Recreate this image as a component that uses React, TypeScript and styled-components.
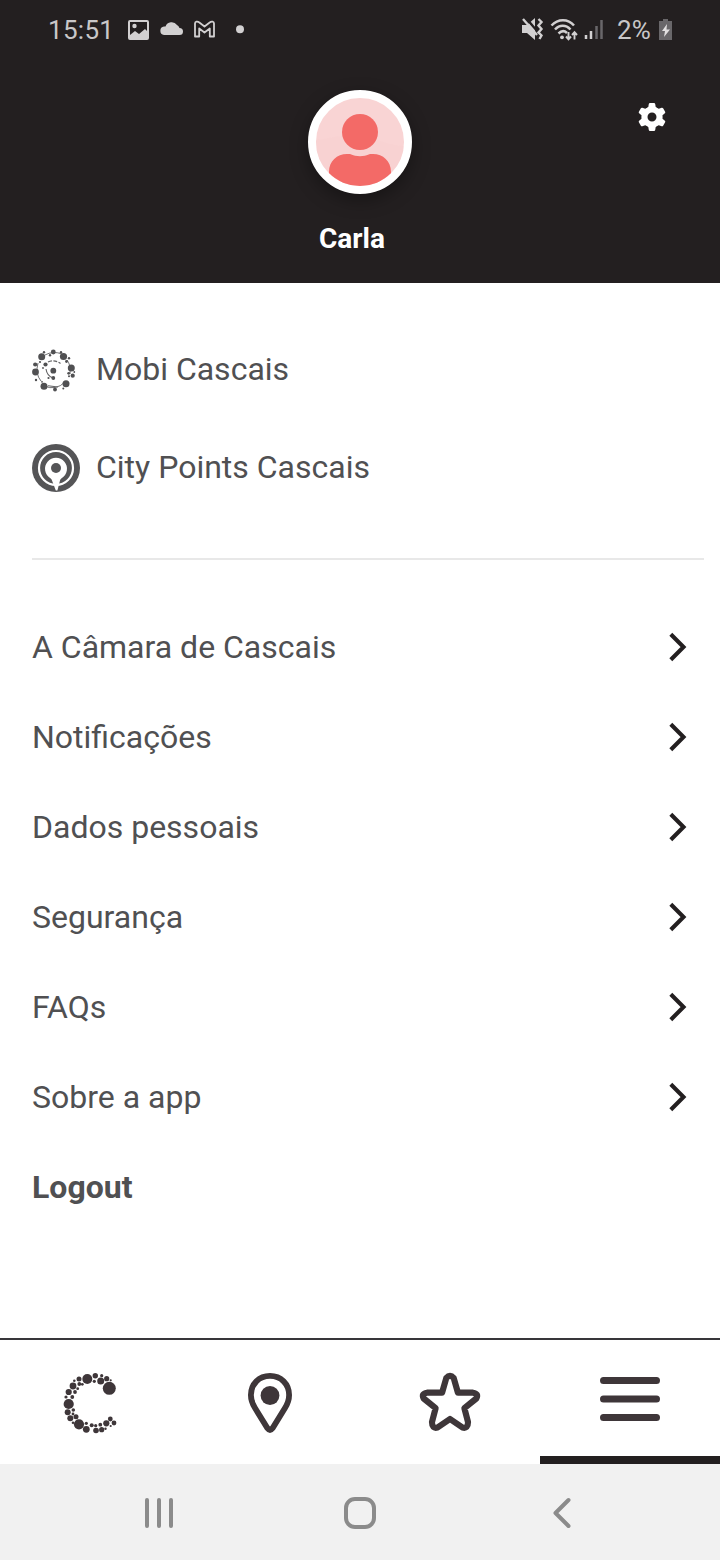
import React from "react";
import styled, { createGlobalStyle } from "styled-components";

const GlobalStyle = createGlobalStyle`
  * { box-sizing: border-box; }
  body { margin: 0; background: #fff; font-family: Roboto, "Liberation Sans", sans-serif; }
  svg { display: block; flex: none; }
`;

const Screen = styled.div`
  width: 720px;
  height: 1560px;
  display: flex;
  flex-direction: column;
  overflow: hidden;
`;

const Header = styled.header`
  height: 283px;
  background: #231f20;
  color: #fff;
`;

const StatusBar = styled.div`
  height: 60px;
  padding: 0 48px;
  display: flex;
  align-items: center;
  justify-content: space-between;
`;

const StatusGroup = styled.div`
  display: flex;
  align-items: center;
`;

const StatusText = styled.span<{ $width: number; $spacing?: number }>`
  width: ${(p) => p.$width}px;
  font-size: 26px;
  letter-spacing: ${(p) => p.$spacing ?? 0}px;
  line-height: 32px;
  color: #c9c7c8;
  white-space: nowrap;
`;

const BatteryLevel = styled(StatusText)`
  margin-left: 11px;
`;

const Profile = styled.div`
  display: grid;
  grid-template-columns: 1fr 104px 1fr;
  padding: 30px 54px 0;
`;

const Avatar = styled.div`
  grid-column: 2;
  width: 104px;
  height: 104px;
  border-radius: 50%;
  border: 8px solid #fff;
  background: #f9d4d4;
  box-shadow: 0 6px 18px rgba(0, 0, 0, 0.35);
`;

const SettingsButton = styled.button`
  justify-self: end;
  align-self: start;
  margin-top: 12px;
  padding: 0;
  border: 0;
  background: none;
`;

const UserName = styled.h1`
  margin: 28px 0 0;
  width: 704px;
  font-size: 28px;
  line-height: 34px;
  font-weight: 700;
  text-align: center;
`;

const Main = styled.main`
  flex: 1;
  padding: 38px 16px 0 32px;
`;

const Services = styled.section`
  height: 239px;
  border-bottom: 2px solid #e8e8e8;
`;

const ServiceRow = styled.a`
  height: 98px;
  display: flex;
  align-items: center;
  gap: 16px;
`;

const Menu = styled.nav`
  padding-top: 42px;
`;

const MenuRow = styled.a`
  height: 90px;
  padding-right: 16px;
  display: flex;
  align-items: center;
  justify-content: space-between;
`;

const Label = styled.span<{ $bold?: boolean }>`
  font-size: 32px;
  line-height: 40px;
  font-weight: ${(p) => (p.$bold ? 700 : 400)};
  color: #505052;
`;

const ServiceLabel = styled(Label)`
  padding-bottom: 2px;
`;

const TabBar = styled.nav`
  height: 126px;
  border-top: 2px solid #38363a;
  display: grid;
  grid-template-columns: repeat(4, 1fr);
`;

const Tab = styled.a<{ $active?: boolean }>`
  display: flex;
  justify-content: center;
  padding-top: 28px;
  border-bottom: 8px solid ${(p) => (p.$active ? "#231f20" : "transparent")};
`;

const SystemBar = styled.div`
  height: 96px;
  background: #f1f1f1;
  display: grid;
  grid-template-columns: 201px 1fr 201px;
  align-items: center;
  justify-items: center;
  padding: 2px 58px 0;
`;

type Dot = [number, number, number];

const Dots = ({ dots, fill }: { dots: Dot[]; fill: string }) => (
  <g fill={fill}>
    {dots.map(([x, y, r], i) => (
      <circle key={i} cx={x} cy={y} r={r} />
    ))}
  </g>
);

const StatusLeftIcons = () => (
  <svg width="130" height="32" viewBox="120 14 130 32" fill="#d2d0d1">
    <path
      fillRule="evenodd"
      d="M130 20h17a2 2 0 0 1 2 2v16a2 2 0 0 1-2 2h-17a2 2 0 0 1-2-2V22a2 2 0 0 1 2-2Zm0 2v13l5-4 4 3 6-5 2 2v-9Zm4.500 1.800a2.200 2.200 0 1 1 0 4.400 2.200 2.200 0 0 1 0-4.400Z"
    />
    <path d="M164 35a4.300 4.300 0 0 1 0-8.500h1.500a6.500 6.500 0 0 1 11.500-1.500 5.500 5.500 0 0 1 2.500 3 3.500 3.500 0 0 1 0 7Z" />
    <path
      d="M195 23.500v13h4.200v-8l5.300 4 5.300-4v8h4.200v-13c0-2-2.500-2.500-4-1.200l-5.500 4.200-5.500-4.200c-1.500-1.300-4-.800-4 1.200Z"
      fill="none"
      stroke="#d2d0d1"
      strokeWidth="1.800"
      strokeLinejoin="round"
    />
    <circle cx="240" cy="29.300" r="4" />
  </svg>
);

const StatusRightIcons = () => (
  <svg width="86" height="32" viewBox="520 14 86 32" fill="none" stroke="#d2d0d1">
    <path d="M522 25h5l8-7v22l-8-7h-5Z" fill="#d2d0d1" stroke="none" />
    <path d="M525 17l13 15" stroke="#231f20" strokeWidth="2.500" />
    <path d="M523 19l14 16" strokeWidth="2.400" />
    <path d="M538.500 19l3 3-3 3.500 3 3.500-3 3.500 3 3-2 3.500" strokeWidth="2.400" />
    <path d="M551.500 25.500c6.500-7 16.500-7 22.500 0M555 29.500c4.500-5 11-5 15.500 0M558.500 33.500c3-3 6-3 8.500-.5" strokeWidth="2.500" />
    <circle cx="562" cy="37.300" r="1.900" fill="#d2d0d1" stroke="none" />
    <path d="M568.500 32v7m-2.500-2.500 2.500 2.800 2.500-2.800M574.500 39.500v-7m-2.500 2.500 2.500-2.800 2.500 2.800" strokeWidth="1.900" />
    <path d="M586 35v4M591 31v8" strokeWidth="2.500" />
    <path d="M596.500 26v13M601.500 20v19" stroke="#69676a" strokeWidth="2.500" />
  </svg>
);

const BatteryIcon = () => (
  <svg width="13" height="22" viewBox="0 0 13 22">
    <path d="M4 0h5v2h4v19H0V2h4Z" fill="#69676a" />
    <path d="M8 5 3 12h3l-1 6 6-7.500H7.500Z" fill="#e2e0e1" />
  </svg>
);

const PersonIcon = () => (
  <svg width="88" height="88" viewBox="316 98 88 88">
    <defs>
      <clipPath id="portrait">
        <circle cx="360" cy="142" r="44" />
      </clipPath>
    </defs>
    <g clipPath="url(#portrait)">
      <path d="M316 140c15-2 28-6 44-4s29 10 44 10v40h-88Z" fill="#f7cfcf" opacity=".4" />
      <circle cx="360" cy="132" r="18" fill="#f36a67" />
      <path d="M329 186v-14c0-11 8-18 18-18h3c7 3 13 3 20 0h3c10 0 18 7 18 18v14Z" fill="#f36a67" />
    </g>
  </svg>
);

const GearIcon = () => (
  <svg width="28" height="30" viewBox="-14 -15 28 30">
    <g fill="#fff">
      <path
        fillRule="evenodd"
        d="M0-10.400A10.400 10.400 0 1 0 0 10.400 10.400 10.400 0 0 0 0-10.400ZM0-4.500A4.500 4.500 0 1 1 0 4.500 4.500 4.500 0 0 1 0-4.500Z"
      />
      {[0, 60, 120, 180, 240, 300].map((a) => (
        <path key={a} transform={`rotate(${a})`} d="M-5.600-8.500-3.700-10-3.200-13Q-3-14-2-14H2Q3-14 3.200-13L3.700-10 5.600-8.500 3-7H-3Z" />
      ))}
    </g>
  </svg>
);

const mobiDots: Dot[] = [
  [41.700, 356.800, 3.500], [53.300, 352, 2.400], [63.500, 356.500, 3.600], [71.300, 368, 3.500],
  [66, 383.700, 3.500], [44, 386.300, 3.500], [35.500, 372, 3.400], [35.200, 364.500, 2.100],
  [45.500, 364.500, 2.100], [53.300, 370.700, 2.900], [53.300, 378, 1.900], [72.700, 375.700, 2.100],
  [55, 389.500, 1.900], [44, 352.300, 1.200], [61, 352.300, 1.200], [69, 358.300, 1.200], [66.500, 361.500, 1.400],
  [68.700, 373.300, 1.400], [36, 380, 1.200], [42, 381.800, 0.900], [63.300, 388.500, 1],
  [48.500, 378, 1.100], [40, 362, 1.100], [50, 355.300, 1.200], [43, 368, 0.900], [74.300, 372, 0.900],
  [69, 376.300, 1],
];

const MobiIcon = () => (
  <svg width="48" height="48" viewBox="32 346 48 48">
    <g fill="none" stroke="#626264">
      <path d="M45 355Q53 350.500 62 354M67 360Q71 365 70 374M65 382Q56 391 44 386M41 381Q35 374 38 363" strokeWidth=".9" />
      <path d="M48 362Q54 359 60.500 363.500" strokeWidth="1.300" strokeDasharray="4 1.500" />
      <path d="M46 369Q47 376 53 378M48 385.700L58 387" strokeWidth="1.100" />
    </g>
    <Dots dots={mobiDots} fill="#505052" />
  </svg>
);

const CityPointsIcon = () => (
  <svg width="48" height="48" viewBox="0 0 48 48">
    <circle cx="24" cy="24" r="24" fill="#555557" />
    <circle cx="24" cy="24" r="17" fill="none" stroke="#fff" strokeWidth="2.200" />
    <path
      d="M18.400 34.200A11 11 0 1 1 29.600 34.200Q28.300 35 28 36.500L25.400 46.500H23.800L20 36.500Q19.700 35 18.400 34.200Z"
      fill="#fff"
    />
    <circle cx="24" cy="24" r="5" fill="#555557" />
  </svg>
);

const Chevron = () => (
  <svg width="20" height="30" viewBox="0 0 20 30">
    <path d="m2.800 2.300 12.700 12.700L2.800 27.700" fill="none" stroke="#231f20" strokeWidth="4.100" />
  </svg>
);

const cascaisDots: Dot[] = [
  [109.300, 1388.300, 6.500], [87.300, 1379, 5], [100.700, 1381, 3.500], [95.300, 1375.700, 2.700],
  [106.700, 1378.700, 2.600], [94.300, 1381.300, 1.600], [101.700, 1375.700, 1.600], [110.700, 1380.300, 1.100],
  [79, 1379, 2.500], [73, 1386, 3.400], [74.300, 1380.700, 1.300], [79.300, 1384, 1.900], [82.300, 1384.300, 1.400],
  [68.700, 1392, 3.100], [75, 1392, 1.900], [77.700, 1388.700, 1.400], [66, 1397, 1.600], [72.300, 1397, 1.900],
  [68.700, 1404, 5.100], [67.700, 1412.300, 3], [73.300, 1410, 1.800], [73, 1414, 1.400],
  [70.300, 1418.300, 3], [76, 1416.700, 2.500], [73, 1422.700, 1.300], [79, 1424.300, 5.100],
  [77, 1422, 1.500], [86.300, 1429.300, 3.400], [86.300, 1423.300, 1.600], [91.700, 1425.300, 2],
  [96, 1430.500, 2.800], [95.700, 1425.700, 1.600], [101.700, 1429.700, 2.600], [100.300, 1424.700, 1.900],
  [106.300, 1423.300, 3.100], [105.500, 1428.700, 1.200], [110.300, 1419, 2.400], [114, 1423, 2.400], [110.700, 1426, 1.100],
];

const CascaisIcon = () => (
  <svg width="60" height="66" viewBox="60 1368 60 66">
    <Dots dots={cascaisDots} fill="#3e3639" />
  </svg>
);

const PinIcon = () => (
  <svg width="60" height="66" viewBox="240 1368 60 66">
    <path
      d="M270 1375.900C259 1375.900 250.900 1384 250.900 1395Q250.900 1401.500 255 1408L267.500 1428.300Q270 1431.700 272.500 1428.300L285 1408Q289.100 1401.500 289.100 1395C289.100 1384 281 1375.900 270 1375.900Z"
      fill="none"
      stroke="#3e3639"
      strokeWidth="5.800"
    />
    <circle cx="270" cy="1395.500" r="9.400" fill="#3e3639" />
  </svg>
);

const StarIcon = () => (
  <svg width="66" height="66" viewBox="417 1368 66 66">
    <path
      d="M446.300 1378Q450 1373.700 453.700 1378L457.900 1392.700H473Q479 1393.500 476.300 1398.500L464.400 1408.200 468 1422Q468 1429 462.500 1427.500L450 1419 437.500 1427.500Q432 1429 432 1422L435.600 1408.200 423.700 1398.500Q421 1393.500 427 1392.700H442.100Z"
      fill="none"
      stroke="#3e3639"
      strokeWidth="6.200"
      strokeLinejoin="round"
    />
  </svg>
);

const MenuIcon = () => (
  <svg width="60" height="66" viewBox="600 1368 60 66">
    <path d="M603.500 1380.500h53M603.500 1399h53M603.500 1417.500h53" stroke="#3e3639" strokeWidth="7" strokeLinecap="round" />
  </svg>
);

const RecentsIcon = () => (
  <svg width="30" height="32" viewBox="0 0 30 32">
    <path d="M3 3v26M15 3v26M27 3v26" stroke="#8b8b8b" strokeWidth="4" strokeLinecap="round" />
  </svg>
);

const HomeIcon = () => (
  <svg width="32" height="32" viewBox="0 0 32 32">
    <rect x="2" y="2" width="28" height="28" rx="9" fill="none" stroke="#8b8b8b" strokeWidth="4" />
  </svg>
);

const BackIcon = () => (
  <svg width="20" height="32" viewBox="0 0 20 32">
    <path d="M16.500 3 3.500 16l13 13" fill="none" stroke="#8b8b8b" strokeWidth="4" strokeLinecap="round" strokeLinejoin="round" />
  </svg>
);

const menuItems = ["A Câmara de Cascais", "Notificações", "Dados pessoais", "Segurança", "FAQs", "Sobre a app"];

export default function App() {
  return (
    <>
      <GlobalStyle />
      <Screen>
        <Header>
          <StatusBar>
            <StatusGroup>
              <StatusText $width={72} $spacing={0.3}>15:51</StatusText>
              <StatusLeftIcons />
            </StatusGroup>
            <StatusGroup>
              <StatusRightIcons />
              <BatteryLevel $width={42} $spacing={0.2}>2%</BatteryLevel>
              <BatteryIcon />
            </StatusGroup>
          </StatusBar>
          <Profile>
            <Avatar>
              <PersonIcon />
            </Avatar>
            <SettingsButton aria-label="Definições">
              <GearIcon />
            </SettingsButton>
          </Profile>
          <UserName>Carla</UserName>
        </Header>
        <Main>
          <Services>
            <ServiceRow>
              <MobiIcon />
              <ServiceLabel>Mobi Cascais</ServiceLabel>
            </ServiceRow>
            <ServiceRow>
              <CityPointsIcon />
              <ServiceLabel>City Points Cascais</ServiceLabel>
            </ServiceRow>
          </Services>
          <Menu>
            {menuItems.map((item) => (
              <MenuRow key={item}>
                <Label>{item}</Label>
                <Chevron />
              </MenuRow>
            ))}
            <MenuRow>
              <Label $bold>Logout</Label>
            </MenuRow>
          </Menu>
        </Main>
        <TabBar>
          <Tab><CascaisIcon /></Tab>
          <Tab><PinIcon /></Tab>
          <Tab><StarIcon /></Tab>
          <Tab $active><MenuIcon /></Tab>
        </TabBar>
        <SystemBar>
          <RecentsIcon />
          <HomeIcon />
          <BackIcon />
        </SystemBar>
      </Screen>
    </>
  );
}
